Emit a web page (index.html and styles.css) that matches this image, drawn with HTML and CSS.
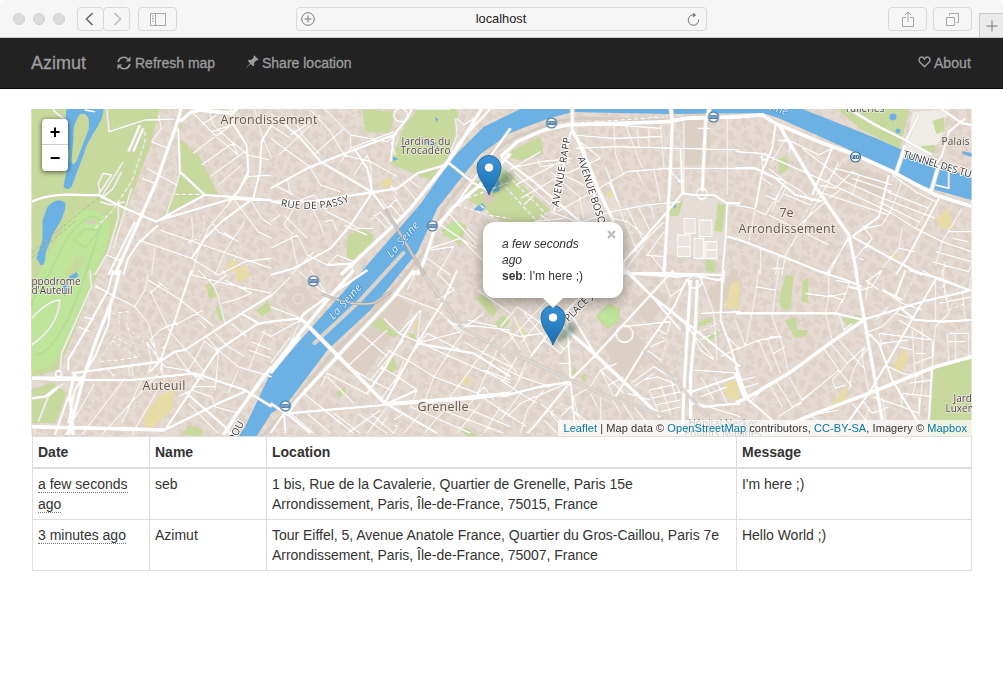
FILE: index.html
```html
<!DOCTYPE html>
<html lang="en">
<head>
<meta charset="utf-8">
<title>Azimut</title>
<link rel="stylesheet" href="styles.css">
</head>
<body>
<header class="toolbar">
  <div class="lights"><i></i><i></i><i></i></div>
  <div class="history">
    <span class="btn back"><svg width="25" height="22" viewBox="0 0 25 22"><path d="M14.500 5 8.500 11 14.500 17"/></svg></span>
    <span class="btn forward"><svg width="25" height="22" viewBox="0 0 25 22"><path d="M10.500 5 16.500 11 10.500 17"/></svg></span>
  </div>
  <span class="btn wide sidebar"><svg width="16" height="13" viewBox="0 0 16 13"><path d="M.5.5h15v12H.5zM5.500.5v12M2 3h2M2 5.500h2M2 8h2"/></svg></span>
  <div class="address">
    <svg width="14" height="14" viewBox="0 0 14 14"><circle cx="7" cy="7" r="6.300"/><path d="M7 3.500v7M3.500 7h7"/></svg>
    <span>localhost</span>
    <svg width="13" height="15" viewBox="0 0 13 15"><path d="M8 3.100A5.200 5.200 0 1 0 11.600 7.500"/><path class="tip" d="M6 .8 9.300 3.100 6 5.500z"/></svg>
  </div>
  <span class="btn wide share"><svg width="12" height="16" viewBox="0 0 12 16"><path d="M4 6.500H.5v9h11v-9H8M6 11V1M3 4l3-3 3 3"/></svg></span>
  <span class="btn wide tabs"><svg width="13" height="13" viewBox="0 0 13 13"><path d="M.5 4.500h8v8h-8zM3.500 2.500v-2h9v9h-2"/></svg></span>
  <span class="newtab"><svg width="12" height="12" viewBox="0 0 12 12"><path d="M6 .5v11M.5 6h11"/></svg></span>
</header>

<nav class="navbar">
  <a class="brand">Azimut</a>
  <a class="item refresh"><svg width="14" height="14" viewBox="0 0 14 14"><path class="line" d="M1.200 6A5.700 5.700 0 0 1 11 3.200M12.800 8A5.700 5.700 0 0 1 3 10.900"/><path d="M13.500.6v5H8.600zM.5 13.400v-5h4.900z"/></svg><span>Refresh map</span></a>
  <a class="item pin"><svg width="14" height="14" viewBox="0 0 14 14"><path d="M9.200.3 13.700 4.800 12.600 5.500 11.500 5.200 9 8 9.300 10.500 8.200 11.200 5.700 8.900.3 13.800 5.100 8.300 2.800 5.800 3.700 4.800 6.100 5 8.800 2.500 8.500 1.200z"/></svg><span>Share location</span></a>
  <a class="item about"><svg width="13" height="12" viewBox="0 0 14 13"><path class="line" d="M7 11.700 1.700 6.200C.2 4.100 1.500 1.200 3.900 1.200 5.500 1.200 6.400 2.300 7 3.300 7.600 2.300 8.500 1.200 10.100 1.200 12.500 1.200 13.800 4.100 12.300 6.200z"/></svg><span>About</span></a>
</nav>

<main class="container">
<section class="map">
<svg class="tiles" width="940" height="327" viewBox="31 109 940 327">
  <defs>
    <pattern id="blocks" width="47" height="41" patternUnits="userSpaceOnUse" patternTransform="rotate(27)">
      <rect width="47" height="41" fill="#e5dbd2"/>
      <path fill="#dfd3c9" d="M1 2h7v2h5v5H8v3H1zM16 1h9v3h-3v5h-6zM29 3h5v7h-5zM37 1h8v4h-2v6h-4V7h-2zM2 16h4v7h7v4H2zM10 14h10v4h-4v3h-6zM24 13h7v3h4v6h-8v-4h-3zM39 15h6v9h-3v-3h-3zM1 31h8v3h4v5H4v-3H1zM17 24h5v5h5v6h-7v-4h-3zM31 26h10v3h-4v6h-6zM42 32h4v7h-8v-3h4zM24 37h9v3h-9z"/>
      <path fill="#d9cdc2" d="M13 1h2v3h-2zM22 10h2v2h-2zM35 22h2v2h-2zM15 20h2v2h-2zM27 30h2v3h-2z"/>
    </pattern>
    <g id="rer"><circle r="5" fill="#edf3f6" stroke="#386a96" stroke-width="1.100"/><rect x="-4" y="-2" width="8" height="4" rx="1" fill="#4575a0"/><path d="M-3 1v-2h1.500M-.7 -1h1.400M-.7 0h1M-.7 1h1.400M2 1v-2h1.300" stroke="#fff" stroke-width=".6" fill="none"/></g>
    <linearGradient id="pinfill" x2="0" y2="1"><stop stop-color="#3b96da"/><stop offset="1" stop-color="#196cae"/></linearGradient>
    <g id="pin">
      <path d="M0 0 10-17 17-24 25-19 18-9z" fill="#234b3b" opacity=".42" filter="blur(2.500px)"/>
      <path d="M0 0C-3-9-12-17-12-27.500A12 12 0 0 1 12-27.500C12-17 3-9 0 0z" fill="url(#pinfill)" stroke="#236ea8" stroke-width="1"/>
      <circle cy="-27.500" r="4.600" fill="#fff" stroke="#246dab" stroke-width=".7"/>
    </g>
  </defs>
  <rect x="31" y="109" width="940" height="327" fill="url(#blocks)"/>

  <!-- large institutional plots -->
  <path fill="#dcd0c5" d="M370 309 387 294 412 305 407 318 392 333 374 323ZM348 334 373 324 392 336 362 380 328 362ZM630 305 651 285 668 300 648 325ZM602 342 620 316 650 350 624 387ZM683 109H710V165H683ZM830 160 890 178 880 198 840 180ZM705 292 735 270 742 285 718 310Z"/>
  <path fill="#e6ddd6" d="M684 198H724V255H667L664 230ZM570 205 615 195 627 213 590 224Z"/>
  <path fill="#efece8" d="M912 112 948 109 940 140 925 158 904 152Z"/>

  <!-- parks -->
  <g fill="#c8d99d">
    <path d="M31 109H159L151 142 128 205 98 272 58 370 31 377Z"/>
    <path d="M176 140 184 109 179 138 200 158 218 195 192 200 162 218 180 175Z"/>
    <path d="M31 390 52 382 66 393 55 423 31 423ZM205 285 213 282 217 296 209 299ZM215 308 220 304 225 322 219 320ZM256 310 268 300 271 310 261 317ZM362 109 395 112 389 133 365 132Z"/>
    <path d="M404 125 418 109H455L458 113 451 155 437 168 432 181 390 164Z"/>
    <path d="M463 196 495 162 550 210 529 225 500 221Z"/>
    <path d="M513 150 540 136 543 154 518 160 504 156ZM670 205 683 200 678 216 665 216ZM717 203 725 205 722 232 714 231ZM777 160 785 156 788 169 779 175ZM705 260 714 261 715 273 705 271Z"/>
    <path d="M837 109H909L899 149 860 129Z"/>
    <path d="M932 367 971 356V436H929ZM920 146 935 145 934 153 924 151ZM932 121 944 117V131L936 134Z"/>
    <path d="M347 236 361 227 373 235 371 250 351 262 346 256ZM440 230 455 220 466 225 460 246ZM370 324 382 317 389 329 400 333 393 338ZM406 333 415 334 415 342ZM382 363 392 353 397 369 390 373ZM336 393 344 387 346 391 339 398ZM475 298 483 293 497 310 492 317ZM494 323 503 315 510 321 501 331Z"/>
    <path d="M595 317 608 303 620 309 618 323 607 329ZM569 374 574 368 578 371 573 378ZM580 376 586 374 584 383ZM784 320 795 317 797 330 807 330 806 336 795 338ZM779 297 785 275 793 276 790 310 780 308ZM802 281 808 277 807 302 801 302ZM842 318 858 315 864 321 849 328ZM460 430 466 427 476 436H466ZM181 434 189 425 203 430 200 436Z"/>
    <path d="M697 325 712 319M704 341 718 332" stroke="#c8d99d" stroke-width="5"/>
  </g>
  <g fill="#bfe59b">
    <path d="M34 285Q48 245 76 212C85 205 101 211 108 222 116 235 88 280 73 330L51 365 31 371V287Z"/>
    <path d="M446 228 454 222 462 226 456 242 443 235ZM598 317 608 306 617 310 616 320 607 326Z"/>
  </g>
  <g fill="none" stroke="#b6dd94" stroke-width="2"><path d="M36 355C67 348 90 255 101 225 98 207 75 220 60 250 46 285 31 295 31 306"/><path d="M73 240 84 229 99 230 85 248Z"/></g>
  <path fill="#d8cabe" d="M85 222q8-5 11 1-6 3-11-1ZM482 192 490 188 494 201 486 205ZM481 169 491 167 490 180Z"/>
  <path fill="#c8d99d" d="M64 275 77 255 84 260 73 278Z"/>
  <g fill="#e9dba6"><path d="M235 270 246 265 249 277 237 283ZM225 267 235 254 239 270 228 272ZM142 417 160 394 175 390 171 410 155 425 145 430ZM380 181 389 177 393 184 383 190ZM606 193 611 188 615 195 608 198ZM730 284 739 280V309L725 308ZM724 384 738 378V403L725 396ZM888 255 896 253 897 260 889 261ZM893 365 905 347 908 359 899 375ZM830 405 848 385 846 397 838 409ZM936 219 947 208 954 230 940 228ZM460 380 464 374 471 380 466 386ZM413 323 417 320 417 329 413 331ZM514 325 519 321 527 337 523 340Z"/></g>

  <!-- water -->
  <g fill="#6cb1e3">
    <path d="M238 436 244 428 270 373 300 340 358 275 420 204 452 158 483 127 520 109H802L875 138 902 150 971 178V200L928 188 892 173 845 148 778 118 762 113 667 114 572 112 550 118 530 125 510 133 480 154 463 175 437 208 417 252 370 310 327 350 287 403 271 413 256 436Z"/>
    <path fill-rule="evenodd" d="M66 109H103C103 123 90 133 84 152L71 187Q67 191 63 187L69 155 64 130ZM77 118Q72 127 73 137L71 160Q72 168 76 161L88 130Q90 116 84 114 79 113 77 118Z"/>
    <path d="M47 207Q57 196 65 203 66 214 53 233L45 253Q45 267 40 265L36 258 42 240 42 220ZM68 277 76 272 78 276 72 280ZM62 285 68 283 64 297ZM477 206 482 203 485 207 482 211 473 210ZM491 185 499 179 499 191 493 193ZM391 156 398 159 393 161ZM434 117 438 119 436 122ZM426 139 436 143 433 148 425 143ZM962 151 971 153V157L962 154ZM889 117a3.500 3.500 0 1 0 7 0 3.500 3.500 0 1 0-7 0ZM895 131a2.500 2.500 0 1 0 5 0 2.500 2.500 0 1 0-5 0ZM672 203 676 206 674 209Z"/>
  </g>
  <path d="M403 253 358 302 314 343" stroke="#d9d5cc" stroke-width="4" fill="none" stroke-linecap="round"/>
  <g fill="none" stroke="#d6cbc1" stroke-width="3"><path d="M469 176 443 209 423 253 375 311 331 354 291 404 262 436"/><path d="M483 158 517 136 558 121 580 118 665 120"/></g>
  <path d="M31 253 74 217 107 191M31 258 75 221" stroke="#aebc8e" fill="none" stroke-dasharray="4 2"/>

  <!-- streets, drawn in 3x sheets of 240 x 170 -->
  <g class="streets">
    <g transform="translate(31 105) scale(.33333)">
      <path class="w1" d="M225 0 232 80 340 45 430 42M380 30 390 70 360 110 410 130M345 190 435 240M400 340 435 240 445 200M330 220 370 235M320 405 480 460 560 510M480 335 485 390 475 420M385 375 600 450 720 490M370 430 360 510M485 145 530 110 600 60M510 180 610 110M535 215 640 140M560 240 630 180M530 10 545 60 600 110 650 150 650 215 605 280M510 60 555 30M540 80 600 60 610 20M600 110 620 150M650 150 715 165M650 215 720 210M605 280 680 380 720 400M605 280 530 370 500 440 480 510M540 350 560 380 600 400M660 290 690 340 720 360M620 410 575 380M550 510 585 430 640 350M200 270 240 210 215 205 200 235 205 260M210 275 275 170M205 290 240 300 280 290M225 450 275 470M245 430 300 250M190 510 230 440 260 340 260 290M270 200 245 250 210 280M160 15 190 20M55 0 70 20 95 40M480 20 560 100 620 150M670 15 690 90 720 160M560 510 640 470 720 460"/>
      <path class="w2" d="M0 290C80 255 150 275 200 270L270 305 375 350 445 310 520 270 590 275 720 285M440 70 445 200 520 270M595 0 600 50 645 120 650 200 620 260 590 290M720 60 690 110 685 200 665 280 570 350 520 400 480 460M720 285 660 285 605 280 385 345M325 60 290 140M335 70 305 140M230 510 310 350M275 510 290 460 320 415 380 360"/>
      <path class="w3" d="M450 0C440 60 410 120 375 230L290 420 250 510M500 15 600 25 630 0M445 50 480 20 510 15"/>
      <path class="dash" d="M340 80 340 110 300 230 240 320 190 370M430 268 515 268M515 330 520 370 500 400 450 420M630 420 600 480"/>
    </g>
    <g transform="translate(31 270) scale(.33333)">
      <path class="w1" d="M190 45 240 75 310 110 350 160 370 230 380 275M350 10 340 60 310 110M355 60 415 185 490 270 520 310M350 30 440 85 540 165M380 35 410 60M355 70 390 40M480 15 600 45 720 70M500 0 545 45 560 80 580 160M545 45 585 15 570 0M580 30 660 70 610 90 570 100M400 170 440 160 515 120M430 155 440 170M500 150 525 175M520 145 545 170M345 215 400 290 460 300 520 330M345 215 360 270 350 310M370 235 355 210 385 180 430 160M390 235 405 225M390 280 395 320M430 245 465 295 500 330M520 210 490 270 470 300M525 200 560 240 620 290 720 320M550 190 590 230 640 260M600 160 645 200M630 130 690 165M650 240 720 265M660 215 720 240M690 185 720 200M650 300 700 180M590 370 620 300M555 340 560 245 520 215M560 260 550 360M440 380 480 360 540 380 550 410 620 430M470 400 560 490M480 350 550 350M20 455 50 380 95 340M190 340 100 495M280 325 150 495M380 310 210 495M330 330 270 460M390 340 300 495M230 300 250 320M290 290 295 320M300 290 305 320M390 280 385 310M10 480 10 495M175 0 180 50 130 160 90 250 85 300M140 170 175 185M155 140 190 150M190 50 225 65M0 225C50 190 80 150 85 90 60 90 20 120 0 145"/>
      <path class="w2" d="M245 0 230 60 180 150 110 270 110 300M480 0 430 150 385 275 355 305M720 75 630 130 460 240 430 245 385 275 120 310M0 325 80 330 300 330 490 310 640 360 720 410M400 480 480 360 560 240 680 160 720 155M680 160 630 130M400 480 560 400 640 365M0 385 40 380 80 350M110 460 130 360 190 260 230 165 240 90M70 495 110 380M460 365 580 470 600 495M700 310 650 380 580 495"/>
      <path class="w3" d="M265 0 245 80 190 220 160 310 110 495M0 325 160 325M0 470 200 475 400 480M130 310 115 370 125 495M720 290 610 440 575 495"/>
      <path class="dash" d="M240 130 290 125 285 170 325 260 260 270 200 275 250 200 300 230M265 130 260 200M285 170 340 220M240 210 320 265"/>
      <circle cx="81" cy="311" r="9"/>
    </g>
    <g transform="translate(270 105) scale(.33333)">
      <path class="w1" d="M0 100 110 180 130 190M60 30 100 95 150 150M60 90 150 30M25 150 120 60M120 15 180 80 220 150 300 170M150 0 240 90 350 110 380 85M240 90 240 130M130 150 220 70M120 190 150 240 210 260M210 170 240 130 370 80M250 210 290 150 300 180 305 260M300 170 380 215M10 240 70 270M50 220 60 270M0 290 50 300 130 270M70 310 40 360 70 390M120 300 150 360 160 390M160 350 185 345 200 380M130 270 170 320 230 350M40 330 110 400M0 430 80 390 110 450 170 480M60 390 80 480M230 350 260 370 310 370M220 360 290 390M300 345 330 320 360 360M310 330 350 370M340 310 380 350M360 300 395 340M370 270 400 320M400 240 440 290M330 280 350 310 380 280M410 220 450 250M360 240 380 270M360 110 375 150M560 40 580 60 610 40M400 0 440 12 540 12M555 40 560 90 540 140M480 430 570 400 620 430M510 360 570 400 640 470M470 460 540 510M530 320 620 420M480 435 550 425 500 510M590 370 620 400M0 350 30 330M170 480 200 450 250 470M250 470 240 510M60 510 130 440M0 25 40 60M0 60 60 100"/>
      <path class="w2" d="M0 250 110 190 210 150 370 90M0 290 120 290 305 262 380 250 440 205 525 180M305 262 290 190 250 130M305 262 240 360 180 430 70 490 0 510M370 90 410 40 430 0M525 180 560 120 660 10M370 90 360 170M480 420 490 365 540 320 720 70M305 262 340 310 380 355M170 480 255 475M20 40 90 100 150 170 305 262"/>
      <path class="w3" d="M640 0 560 130 525 180 420 310 360 370 210 510M720 145 640 230 545 310 490 380 460 470 440 510"/>
      <path class="w2" d="M530 170 610 235 660 260"/>
      <path class="dash" d="M560 300 650 330 720 340M590 280 720 230M630 300 720 390"/>
      <circle cx="390" cy="30" r="20"/>
    </g>
    <g transform="translate(270 270) scale(.33333)">
      <path class="w1" d="M80 0 150 60 180 80M0 80 60 20M120 0 170 75 90 145M0 110 90 145M0 200 90 150M45 250 90 150M0 280 60 200M170 310 295 375M370 70 500 120 570 180 610 200M410 60 440 0M440 0 390 50M500 90 550 60 500 10M450 120 440 220 570 185M450 120 385 190 340 145M385 190 540 260 720 340M350 240 410 270 490 320 620 370 720 440M385 190 420 150M410 270 470 190M330 290 380 320 440 360M400 270 380 320 330 390M300 330 360 360M320 290 360 240M490 320 540 240 580 185M490 320 460 400M570 340 670 200M570 340 530 390M640 300 720 330M620 370 680 240M590 410 640 350 670 390M580 215 640 250 720 290M530 150 570 190M570 180 640 130M540 160 720 180M590 150 680 170M620 60 720 130M470 190 570 240M440 360 420 410M170 310 150 350M130 340 75 390M100 370 210 460M150 410 250 490M170 320 250 400M230 490 330 420M290 490 350 410M60 430 130 490M110 430 180 490M190 430 270 490M260 430 350 490M300 430 370 490M330 470 350 440M370 490 380 470 370 465M420 410 600 490M460 400 700 490M530 390 720 470M460 490 530 410M560 490 630 400M400 430 370 450M400 490 450 430M640 490 690 410M250 300 300 330 400 210M230 290 350 180M270 190 350 260"/>
      <path class="w2" d="M0 155 90 145 100 130 290 0M0 310 90 200M95 150 200 260 345 400 500 490M720 370 620 385 340 405M50 430 340 405M340 405 440 220 520 90 560 0M440 220 610 250 720 320M340 405 440 360M0 490 40 430 45 490M0 400 60 440 120 490M290 370 345 290 440 130"/>
      <path class="w3" d="M0 300 80 200 170 90 250 0M50 430 80 390 200 260 370 80 430 0M90 145 205 260 345 402 570 385 720 370"/>
      <path class="rail" d="M450 0 580 180 720 250"/>
      <path class="dash" d="M100 360 160 300 220 240M500 150 520 120"/>
    </g>
    <g transform="translate(500 105) scale(.33333)">
      <path class="w1" d="M30 190 120 170 215 160M110 160 120 185 210 170M40 200 100 255 150 300M60 280 200 200M45 240 180 170M70 300 100 270M150 200 230 270M190 210 250 240M200 205 300 160 215 90M215 90 340 100 480 95M220 60 340 60 480 70M225 130 340 125 720 135M340 60 345 150 370 210M375 60 425 190M410 70 415 125M445 70 445 125M480 60 490 190M550 50 550 270M590 70 630 70M680 35 680 270M170 320 270 265 380 200 500 190 720 190M215 360 330 320 440 300 540 290M410 200 430 240M460 195 480 290M315 185 360 310M325 230 350 290M270 250 310 340M235 270 250 340M300 260 340 350M380 310 430 410M360 320 410 440M340 340 380 350 430 390M410 300 450 380M450 300 460 340M500 190 540 230M530 230 550 230M440 450 490 380M435 450 490 455M450 450 500 510M430 420 370 500M490 350 400 440M20 200 120 140M120 330 190 380M100 350 190 340M150 320 230 350M230 320 240 370"/>
      <path class="w2" d="M0 155 100 230 250 360M210 80 160 320M220 80 260 180 300 350M540 130 545 265 500 320 370 470 370 510M545 265 580 270 640 270 680 295 720 295M680 295 675 400 665 510M370 505 500 505M680 395 720 405M500 505 665 510"/>
      <path class="w3" d="M0 155 50 110 130 75 200 60 500 50 560 40 720 35M215 0 215 75 245 130M510 0 515 50 510 190 490 510"/>
      <path class="w3" d="M630 0 615 50 605 260M245 130 300 270 340 350"/>
      <path class="dash" d="M0 230 110 350M20 210 140 330M370 320 400 400M220 55 500 35"/>
      <circle cx="604" cy="266" r="16"/>
      <path class="thin" d="M604 280 565 340M604 280 604 340M604 280 650 340"/>
      <g class="hospital"><path d="M550 340h35v45h-35zM595 345h40v50h-40zM530 390h40v65h-40zM580 400h30v60h-30zM615 410h35v50h-35zM530 425h40M615 435h35"/></g>
    </g>
    <g transform="translate(500 270) scale(.33333)">
      <path class="w1" d="M0 180 60 200 130 190M0 240 140 90M0 170 50 110 150 180M40 140 90 250M70 130 130 200M60 220 120 150M20 180 60 240M130 210 180 250 215 210M160 200 190 240M175 280 205 280M0 250 50 310M50 260 10 330M80 270 40 360M0 330 60 370 110 400M0 290 60 320 150 350M60 490 80 420 130 360M20 440 60 400 200 340M60 370 0 450M120 400 180 450 180 490M220 380 230 430 300 490M220 380 270 350 300 300 370 370M300 300 340 380M325 345 370 320M390 340 460 290 530 330M430 330 470 320 520 340M445 360 540 340M455 385 540 365M465 405 540 390M480 425 540 410M445 360 480 440M480 345 510 430M510 330 530 400M380 370 450 390M460 290 520 330 540 370M400 350 460 310M440 240 480 270M450 230 495 210M475 180 500 195M600 20 640 130 650 270M490 30 510 80 550 50M560 160 600 240 640 270M600 380 680 350M590 400 720 440M580 300 720 310M640 320 680 400M600 320 640 390M660 260 720 230M670 190 720 240M450 75 550 160 640 265M370 170 510 155M600 130 720 125M510 155 500 190M350 280 300 300M310 290 340 310M270 370 290 410M300 380 300 450M330 380 360 430M360 390 400 450M400 410 440 460M180 440 210 410 240 450M130 450 170 490M150 430 200 490M0 420 80 470"/>
      <path class="w2" d="M90 260 190 130 240 80M210 130 285 255 480 440M200 155 210 330M210 330 285 255 500 20 520 0M345 380 430 240 520 110 560 25M380 0 450 75 560 160 720 290M0 380 120 350 210 335M210 335 100 470 80 490M210 335 220 440 225 490M380 10 530 20 580 15 650 30 670 25M665 30 660 150 690 230 720 330M370 0 450 75 540 180M560 370 720 315M575 400 610 410 720 400"/>
      <path class="w3" d="M670 0 665 40M285 255 480 440M130 120 285 255M570 30 560 190 550 370 545 495M590 30 585 160 570 320 570 490M300 70 370 0"/>
      <path class="w4" d="M555 365 570 370"/>
      <path class="rail" d="M0 235 200 325 320 380 500 440M430 240 550 360 620 440"/>
      <circle cx="583" cy="35" r="20"/><circle cx="372" cy="192" r="25"/>
      <path class="dash" d="M80 290 50 340 10 390M480 200 500 210 480 280M150 430 180 400 210 430M590 190 650 160M600 210 660 180"/>
    </g>
    <g transform="translate(735 105) scale(.33333)">
      <path class="w1" d="M0 140 80 145 125 165 250 220 460 320M80 145 80 200 40 410M150 100 110 170M125 105 170 110 250 150 290 130M165 110 160 150M100 190 150 230 200 260 230 290M60 190 150 230 90 330M80 220 110 240M90 270 130 290 150 250M140 240 110 320M140 265 225 300M200 130 330 230 430 275 600 340M250 240 300 250 350 200 370 210 350 270M250 260 460 330M300 190 440 230M470 210 540 260 600 290M500 225 470 310 440 360M440 360 390 370M430 290 550 350M455 260 580 310M350 220 470 260M370 210 470 240M310 170 280 230 150 450M100 330 180 370 280 420M180 370 270 290 240 250M320 250 280 280M340 390 280 510M380 360 410 400 360 460M410 400 390 430M370 460 385 465M460 320 540 370 620 410 710 440M500 370 490 430 440 490M490 430 540 440M540 370 590 290M600 480 620 410 680 310M600 440 710 470M640 380 710 380M650 400 700 410M590 470 700 500 710 470M620 510 630 470M0 300 50 310 90 330M130 450 120 510M75 430 75 510M110 490 140 490M150 450 140 510M270 510 340 400M520 490 560 510M640 200 640 250 600 240"/>
      <path class="w2" d="M0 190 60 190 120 220 180 270 260 290M120 60 110 130 80 200 60 310M0 400 130 450 280 510M290 130 230 270M350 395 430 440 560 510M610 280 520 450 480 510M320 0 420 60 500 100 590 150M550 30 510 110M600 0 680 55 710 60M690 40 640 80 620 150 600 180M350 395 430 335 460 210"/>
      <path class="w3" d="M0 35 80 30 120 55 250 110 360 150 470 200 600 270 710 305M480 210 510 120M585 265 610 180M130 60 250 260 340 390 365 510"/>
      <path class="dash" d="M330 160 240 270M250 260 200 340"/>
      <circle cx="87" cy="156" r="9"/>
    </g>
    <g transform="translate(735 270) scale(.33333)">
      <path class="w1" d="M70 0 60 70 30 230 0 150M60 50 120 60 130 0M120 60 110 140 140 220 160 310M210 70 280 80 330 70 320 100M280 0 280 80 270 130 290 210M280 75 320 90 300 130M300 30 340 40 330 75M310 130 325 180 350 160M390 90 400 30 440 0M440 0 410 50 380 60M440 55 470 80 500 100 560 120M385 190 440 170 500 110M430 60 390 30M460 110 420 150M0 240 70 210 140 200 100 200M70 210 90 260 110 300M95 205 135 310M115 250 150 230M120 330 170 410 200 400M100 340 140 410M160 320 200 390 250 350M20 330 60 320M20 355 70 340M40 400 100 340M265 235 310 300 350 350M310 210 390 300M285 220 335 280 320 300 290 330 300 355 330 345M335 280 390 230M390 230 350 310 340 360M400 230 380 260 400 370M440 230 430 190M430 190 590 210M440 220 520 210M530 180 540 340 530 380M560 170 560 340 550 440M590 210 590 260 540 280M540 250 570 250M600 20 600 150M620 0 640 130 600 170 590 290M640 190 700 190 700 260M635 190 640 280M660 190 660 270M640 215 690 215M610 100 710 80M680 60 690 150M480 130 540 150M490 150 590 210M490 230 530 240M500 370 590 380M495 375 500 410 550 430 550 380M410 380 440 390 500 410M380 390 410 430 460 410M350 400 420 490M400 410 380 490M440 380 450 450M560 310 560 350M520 340 590 330M460 290 500 310 550 320M230 440 300 490M200 440 310 420M130 440 190 400 250 350 310 300M700 65 710 0M560 0 610 30 700 60"/>
      <path class="w2" d="M0 130 300 130 385 150M240 0 330 30 380 50M0 290 40 390 110 450 100 470M380 150 560 95 710 60M490 110 540 150 620 155 710 150M500 90 440 60M605 20 540 130 460 270 400 370 320 480M340 50 380 60M400 190 430 220 470 330 550 460M590 290 580 450M510 0 480 80M520 0 610 25 700 60"/>
      <path class="w3" d="M0 400 40 380 160 310 290 215 385 150M30 390 0 310M400 370 600 290 710 260M100 490 240 430 400 370M360 0 385 140 440 450M40 390 20 370"/>
      <path class="dash" d="M550 0 500 90M620 40 640 120 690 100"/>
    </g>
  </g>
  <g fill="none" stroke="#aaa49f" stroke-width="3"><path d="M385 209 401 236 424 275"/><path d="M322 294Q350 307 374 303L390 292"/><path stroke="#d8d3cd" stroke-width="1.600" d="M385 209 401 236 424 275M322 294Q350 307 374 303L390 292"/></g>
  <g fill="#dcd1c7"><circle cx="298" cy="299" r="13"/><circle cx="298" cy="299" r="5" fill="none" stroke="#e8dfd8" stroke-width="1.500"/></g>

  <use href="#rer" x="432" y="226"/><use href="#rer" x="313" y="281"/><use href="#rer" x="285" y="406"/><use href="#rer" x="551" y="123"/><use href="#rer" x="713" y="117"/><use href="#rer" x="855" y="157"/>

  <g class="place">
    <text x="220" y="124" textLength="97">Arrondissement</text>
    <text x="142" y="390" textLength="43">Auteuil</text>
    <text x="417" y="411" textLength="51">Grenelle</text>
    <text x="779" y="217" textLength="14">7e</text>
    <text x="738" y="233" textLength="97">Arrondissement</text>
  </g>
  <g class="small">
    <text x="401" y="144.500" textLength="49">Jardins du</text><text x="400" y="154" textLength="50">Trocadéro</text>
    <text x="31" y="284.500" textLength="49">ppodrome</text><text x="31" y="294" textLength="41">d'Auteuil</text>
    <text x="844" y="112" textLength="40">Tuileries</text><text x="941" y="145" textLength="28">Palais</text>
    <text x="953" y="402">Jard</text><text x="945" y="412">Luxem</text>
    <text x="688" y="427">Hôpital Necker</text><text x="684" y="437">Enfants Malades</text>
  </g>
  <g class="road">
    <path id="passy" class="guide" d="M280 206Q320 214 350 201"/><text><textPath href="#passy" textLength="70">RUE DE PASSY</textPath></text>
    <text transform="translate(558 207) rotate(-80)" textLength="70">AVENUE RAPP</text>
    <text transform="translate(577 158) rotate(72)" textLength="70">AVENUE BOSQ</text>
    <text transform="translate(568 322) rotate(-45)">PLACE JO</text>
    <text transform="translate(902 157) rotate(17)" textLength="71">TUNNEL DES TU</text>
    <text transform="translate(233 443) rotate(-61)">DOU</text>
  </g>
  <g class="river"><text transform="translate(391 258) rotate(-49)" textLength="43">La Seine</text><text transform="translate(333 320) rotate(-48)" textLength="43">La Seine</text><text transform="translate(748 103) rotate(18)">La Seine</text></g>
  <use href="#pin" x="488.500" y="195"/><use href="#pin" x="552.500" y="345"/>
</svg>
<div class="zoomer"><a>+</a><a>−</a></div>
<div class="popup"><em>a few seconds<br>ago</em><br><b>seb</b>: I'm here ;)<svg class="close" width="9" height="9" viewBox="0 0 9 9"><path d="M1 1 8 8M8 1 1 8"/></svg></div>
<div class="credit"><a>Leaflet</a> | Map data © <a>OpenStreetMap</a> contributors, <a>CC-BY-SA</a>, Imagery © <a>Mapbox</a></div>
</section>

<table>
  <colgroup><col class="c1"><col class="c1"><col class="c3"><col></colgroup>
  <thead><tr><th>Date</th><th>Name</th><th>Location</th><th>Message</th></tr></thead>
  <tbody>
    <tr><td><abbr>a few seconds ago</abbr></td><td>seb</td><td>1 bis, Rue de la Cavalerie, Quartier de Grenelle, Paris 15e<br>Arrondissement, Paris, Île-de-France, 75015, France</td><td>I'm here ;)</td></tr>
    <tr><td><abbr>3 minutes ago</abbr></td><td>Azimut</td><td>Tour Eiffel, 5, Avenue Anatole France, Quartier du Gros-Caillou, Paris 7e<br>Arrondissement, Paris, Île-de-France, 75007, France</td><td>Hello World ;)</td></tr>
  </tbody>
</table>
</main>
</body>
</html>
```

FILE: styles.css
```css
* { box-sizing: border-box; }
body { margin: 0; background: #fff; color: #333; font: 14px/20px "Liberation Sans", Arial, sans-serif; }
svg { display: block; }

.toolbar { display: flex; align-items: flex-start; height: 38px; padding: 7px 0 0 13px; background: #f6f6f6; border-bottom: 1px solid #c9c9c9; border-radius: 5px 5px 0 0; }
.toolbar svg { fill: none; stroke: #a6a6a6; stroke-width: 1; }
.toolbar > * { flex-shrink: 0; }
.lights { display: flex; gap: 8px; padding-top: 6px; width: 64px; }
.lights i { width: 12px; height: 12px; border-radius: 50%; background: #dcdcdc; border: 1px solid #d0d0d0; }
.history { display: flex; }
.btn { display: flex; align-items: center; justify-content: center; height: 24px; width: 27px; border: 1px solid #d9d9d9; border-radius: 4px; }
.forward { margin-left: -1px; }
.toolbar .back svg { stroke: #666; stroke-width: 1.600; }
.toolbar .forward svg { stroke: #bbb; stroke-width: 1.500; }
.wide { width: 39px; }
.sidebar { margin-left: 8px; }
.address { display: flex; align-items: center; justify-content: space-between; width: 411px; height: 24px; margin: 0 181px 0 119px; padding: 0 6px 0 4px; border: 1px solid #d9d9d9; border-radius: 4px; color: #222; font-size: 12.800px; }
.toolbar .address svg { stroke: #777; }
.toolbar .address .tip { fill: #777; stroke: none; }
.tabs { margin-left: 6px; }
.newtab { display: flex; align-items: center; justify-content: center; width: 25px; height: 24px; margin: 6px 0 0 7px; background: #ebebeb; border: solid #c9c9c9; border-width: 1px 0 0 1px; }
.toolbar .newtab svg { stroke: #777; }

.navbar { display: flex; align-items: center; height: 51px; padding: 0 32px 0 31px; background: #222; border-bottom: 1px solid #080808; color: #9d9d9d; -webkit-text-stroke: .3px #9d9d9d; }
.brand { font-size: 18px; width: 86px; }
.item { display: flex; align-items: center; gap: 4px; }
.item svg { fill: #9d9d9d; }
.item .line { fill: none; stroke: #9d9d9d; stroke-width: 1.600; }
.refresh { width: 128px; }
.pin { gap: 3px; }
.pin svg { transform: translateY(-1px); }
.about { margin-left: auto; gap: 3px; letter-spacing: .1px; }
.about svg { transform: translateY(-1px); }

.container { width: 941px; margin: 20px 0 0 31px; }
.map { position: relative; width: 941px; height: 327px; overflow: hidden; font-size: 12px; }
.tiles { width: 941px; }
.streets { filter: drop-shadow(0 0 .6px #b5a79b); fill: none; stroke: #fff; stroke-linejoin: round; }
.w1 { stroke-width: 4.800; }
.w2 { stroke-width: 8; }
.w3 { stroke-width: 12; }
.w4 { stroke-width: 16; }
.thin { stroke-width: 3; }
.streets circle { stroke-width: 6; }
.dash { stroke-width: 4; stroke-dasharray: 14 6; }
.rail { stroke: #dcd7d2; stroke-width: 10; }
.hospital { stroke-width: 4; fill: #ebe3dd; }
.guide { fill: none; stroke: none; }
.place, .small, .road, .river { font-family: "Open Sans", "Noto Sans", sans-serif; paint-order: stroke; stroke: #f1e9e2; stroke-width: 2px; stroke-linejoin: round; fill: #62594f; }
.place { font-size: 12.500px; }
.small { font-size: 10px; fill: #4c4c4c; stroke-width: 1.500px; }
.road { font-size: 10px; fill: #333; stroke: #fff; }
.river { font-size: 11px; font-style: italic; fill: #e2f3ff; stroke: #4c91c7; stroke-width: 1.500px; }

.zoomer { position: absolute; left: 11px; top: 10px; width: 26px; height: 52px; background: #fff; border-radius: 4px; box-shadow: 0 1px 5px rgba(0,0,0,.65); font: bold 18px/27px "Liberation Sans", Arial, sans-serif; text-align: center; color: #000; }
.zoomer a { display: block; height: 26px; }
.zoomer a:first-child { border-bottom: 1px solid #ccc; }
.popup { position: absolute; left: 452px; top: 113px; width: 140px; height: 76px; padding: 14px 20px 0 19px; background: #fff; border-radius: 12px; box-shadow: 0 3px 14px rgba(0,0,0,.4); line-height: 16px; }
.popup::after { content: ""; position: absolute; left: 59px; top: 75px; border: solid transparent; border-width: 11px 11px 0; border-top-color: #fff; }
.close { position: absolute; right: 7px; top: 8px; stroke: #bbb; stroke-width: 2; }
.credit { position: absolute; right: 0; bottom: 0; height: 16px; padding: 0 5px; background: rgba(255,255,255,.7); font-size: 11px; line-height: 16px; letter-spacing: .085px; white-space: nowrap; }
.credit a { color: #0078a8; }

table { width: 940px; margin-left: 1px; border-collapse: collapse; table-layout: fixed; }
.c1 { width: 117px; }
.c3 { width: 470px; }
th, td { border: 1px solid #ddd; padding: 5px; text-align: left; vertical-align: top; white-space: nowrap; }
td:nth-child(n+3) { letter-spacing: -.02px; }
td:first-child { white-space: normal; }
th { border-bottom-width: 2px; }
abbr { border-bottom: 1px dotted #777; }
```
